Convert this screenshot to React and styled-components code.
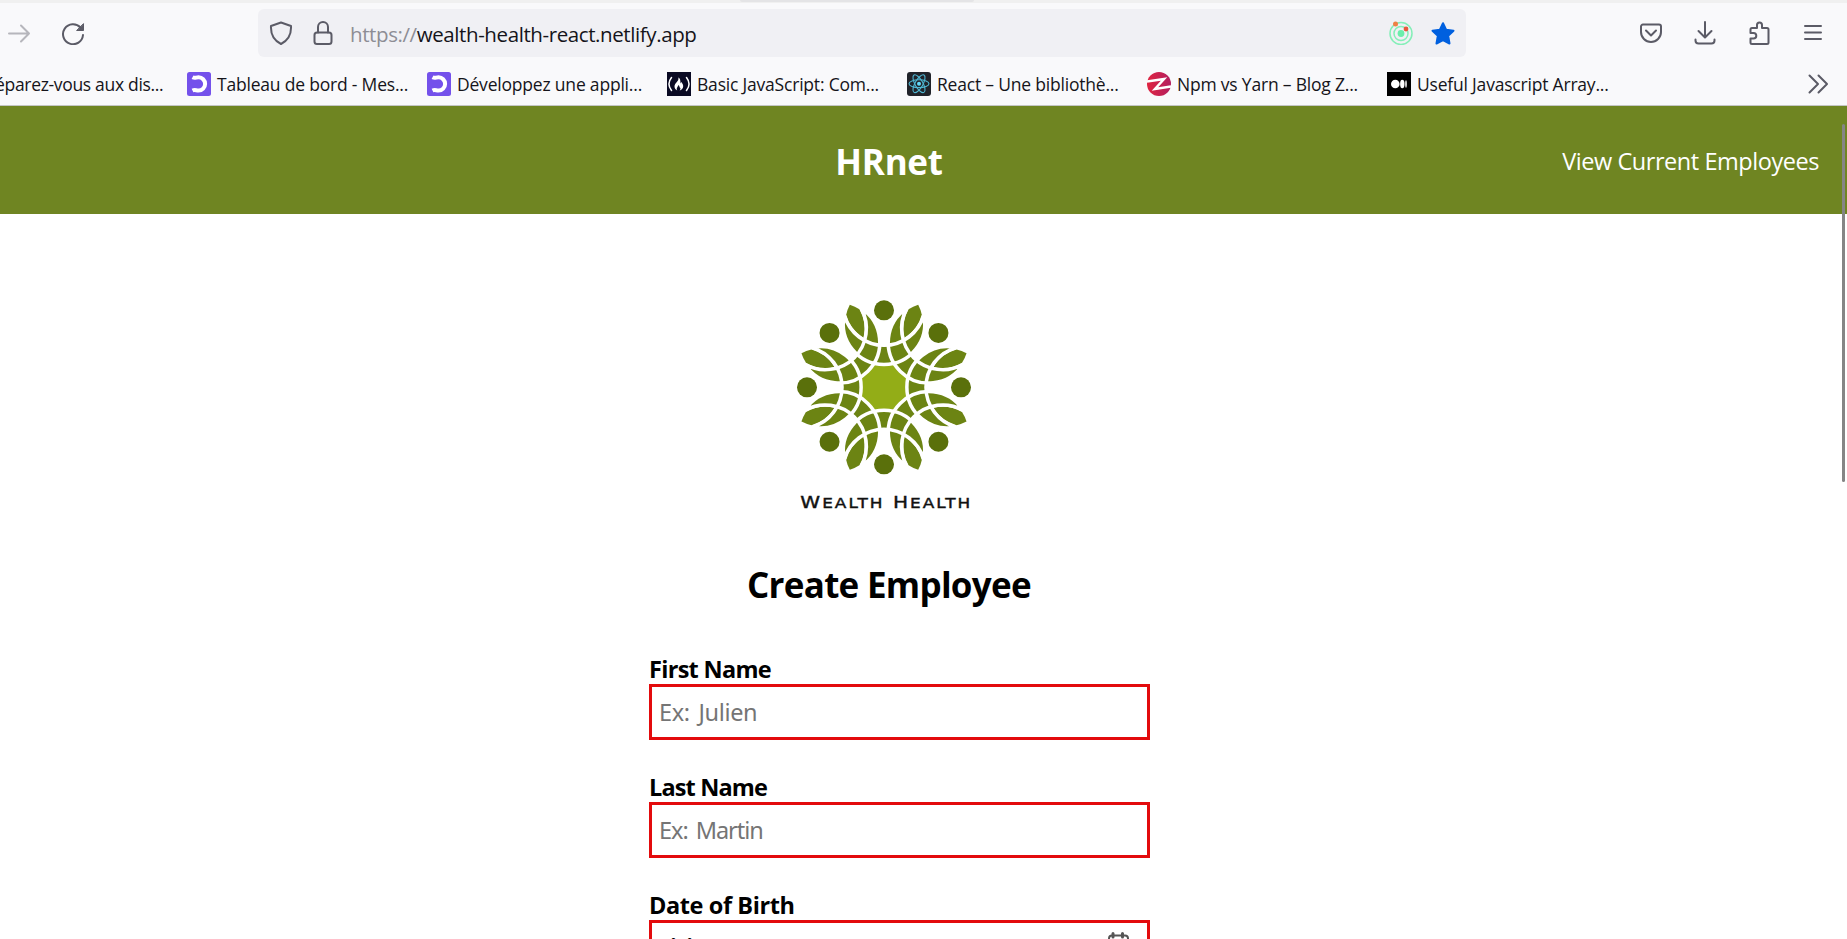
import React from "react";
import styled, { createGlobalStyle } from "styled-components";

const GlobalStyle = createGlobalStyle`
  * { box-sizing: border-box; }
  html, body { margin: 0; padding: 0; overflow: hidden; background: #fff; }
  body { font-family: "Open Sans", "Noto Sans", sans-serif; color: #000; }
  h1, h2 { margin: 0; }
`;

const Page = styled.div`
  width: 1847px;
  height: 939px;
  overflow: hidden;
  position: relative;
  display: flex;
  flex-direction: column;
`;

const TabStrip = styled.div`
  height: 3px;
  flex: none;
  background: #f0f0f0;
  padding-left: 740px;
`;

const TabEdge = styled.div`
  width: 234px;
  height: 2px;
  background: #e4e4e6;
  border-radius: 0 0 6px 6px;
`;

const Toolbar = styled.div`
  height: 62px;
  flex: none;
  background: #f9f9fb;
  display: flex;
  align-items: flex-start;
  padding: 6px 22px 0 8px;
`;

const NavButtons = styled.div`
  width: 250px;
  height: 48px;
  display: flex;
  align-items: center;
  gap: 28px;
`;

const UrlBar = styled.div`
  width: 1208px;
  height: 48px;
  border-radius: 6px;
  background: #f0f0f4;
  display: flex;
  align-items: center;
  padding: 0 11px 0 11px;
`;

const UrlText = styled.div`
  flex: 1;
  margin-left: 15px;
  padding-top: 2px;
  font-size: 20.5px;
  line-height: 28px;
  letter-spacing: -0.4px;
  color: #15141a;
  white-space: nowrap;
  span { color: #8d8d94; }
`;

const Icon = styled.svg`
  display: block;
  flex: none;
  width: 24px;
  height: 24px;
  margin-left: ${(p) => p.$left || 0}px;
  fill: none;
  stroke: ${(p) => p.$color || "#5b5b66"};
  stroke-width: 2;
  stroke-linecap: round;
  stroke-linejoin: round;
`;

const Actions = styled.div`
  flex: 1;
  height: 48px;
  display: flex;
  align-items: center;
  justify-content: flex-end;
  gap: 30px;
`;

const Bookmarks = styled.div`
  height: 41px;
  flex: none;
  background: #f9f9fb;
  border-bottom: 1px solid #c4c6c4;
  display: flex;
  align-items: flex-start;
  padding: 7px 17px 0 0;
`;

const Bookmark = styled.div`
  width: ${(p) => p.$width || 240}px;
  height: 24px;
  display: flex;
  align-items: center;
  gap: 6px;
  flex: none;
`;

const BookmarkText = styled.span`
  font-size: 17.5px;
  line-height: 24px;
  letter-spacing: ${(p) => p.$spacing || "-0.2px"};
  margin-left: ${(p) => p.$left || 0}px;
  color: #15141a;
  white-space: nowrap;
`;

const Overflow = styled.div`
  flex: 1;
  display: flex;
  justify-content: flex-end;
`;

const Header = styled.header`
  height: 108px;
  flex: none;
  background: #6f8522;
  color: #fff;
  display: grid;
  grid-template-columns: 1fr auto 1fr;
  align-items: center;
  padding: 3px 28px 0 0;
`;

const Brand = styled.h1`
  grid-column: 2;
  font-size: 35px;
  line-height: 48px;
  letter-spacing: -0.3px;
  margin-left: -41px;
  padding-top: 1px;
`;

const HeaderLink = styled.a`
  justify-self: end;
  font-size: 23.5px;
  line-height: 32px;
  padding-bottom: 2px;
  letter-spacing: -0.45px;
  color: #fff;
  white-space: nowrap;
`;

const Main = styled.main`
  flex: 1;
  display: flex;
  flex-direction: column;
  align-items: flex-start;
  overflow: hidden;
`;

const Logo = styled.svg`
  display: block;
  flex: none;
  width: 210px;
  height: 240px;
  margin: 71px 0 0 780px;
`;

const FormTitle = styled.h2`
  font-size: 35px;
  line-height: 48px;
  letter-spacing: -0.72px;
  margin: 36px 0 0 747px;
  white-space: nowrap;
`;

const Form = styled.form`
  width: 501px;
  margin: 43px 0 0 649px;
  display: flex;
  flex-direction: column;
  gap: 30px;
`;

const Field = styled.div`
  display: flex;
  flex-direction: column;
  height: 88px;
`;

const Label = styled.label`
  height: 32px;
  font-size: 23.5px;
  line-height: 34px;
  font-weight: 700;
  letter-spacing: ${(p) => p.$spacing || "-0.35px"};
  white-space: nowrap;
`;

const Control = styled.div`
  height: 56px;
  border: 3px solid #e30b0d;
  background: #fff;
  display: flex;
  align-items: center;
  padding: 0 17px 0 7px;
`;

const DateControl = styled(Control)`
  align-items: flex-start;
  justify-content: space-between;
  padding: 9px 17px 0 18px;
`;

const Placeholder = styled.span`
  font-family: "Noto Sans", sans-serif;
  font-size: 23.5px;
  line-height: 32px;
  letter-spacing: ${(p) => p.$spacing || "-0.5px"};
  word-spacing: 3px;
  color: #757575;
  white-space: nowrap;
`;

const DateText = styled.div`
  display: flex;
  margin-top: -2px;
  font-family: "Noto Sans", sans-serif;
  font-size: 24px;
  line-height: 33px;
`;

const DatePart = styled.span`
  width: ${(p) => p.$width}px;
  letter-spacing: ${(p) => p.$spacing || "0"};
  font-weight: ${(p) => p.$weight || 400};
`;

const ScrollThumb = styled.div`
  position: absolute;
  right: 2px;
  top: 124px;
  width: 3px;
  height: 358px;
  border-radius: 2px;
  background: #858585;
`;

const CRESCENT = "M-119.3-216.1A122 122 0 1 0 119.3-216.1A124 124 0 0 1-119.3-216.1Z";
const LEAF =
  "M0-160.3A119 119 0 0 1-21.5-244.5A116 116 0 0 1 0-268A116 116 0 0 1 21.5-244.5A119 119 0 0 1 0-160.3Z";
const TURNS = [0, 45, 90, 135, 180, 225, 270, 315];

function WealthLogo() {
  return (
    <Logo viewBox="0 0 630 720">
      <g transform="translate(312 307)">
        <circle r="78" fill="#93ad17" />
        {TURNS.map((a) => <path key={a} d={CRESCENT} fill="#6c8413" transform={`rotate(${a})`} />)}
        {TURNS.map((a) => <path key={a} d={LEAF} fill="#6c8413" transform={`rotate(${a + 22.5})`} />)}
        {TURNS.map((a) => (
          <path key={a} d={CRESCENT} fill="none" stroke="#fff" strokeWidth="10.5" transform={`rotate(${a})`} />
        ))}
        {TURNS.map((a) => <circle key={a} cy="-231" r="30" fill="#5a700b" transform={`rotate(${a})`} />)}
      </g>
      <text
        x="61" y="670" fill="#111" stroke="#111" strokeWidth="1.2" letterSpacing="5"
        fontFamily="DejaVu Sans" fontSize="50" textLength="516" lengthAdjust="spacingAndGlyphs"
      >
        W<tspan fontSize="42">EALTH</tspan> H<tspan fontSize="42">EALTH</tspan>
      </text>
    </Logo>
  );
}

function ClassroomIcon() {
  return (
    <Icon viewBox="0 0 24 24">
      <rect width="24" height="24" rx="2.500" fill="#7451eb" stroke="none" />
      <path d="M5.500 5.300C8 6.600 9 5.300 11.500 5.300A6.500 6.500 0 0 1 11.500 18.500C9 18.500 8 17.300 5.500 18.500" stroke="#fff" strokeWidth="4" strokeLinecap="butt" />
    </Icon>
  );
}

function CampIcon() {
  return (
    <Icon viewBox="0 0 24 24">
      <rect width="24" height="24" fill="#0a0a23" stroke="none" />
      <path d="M4.500 5.500Q-.600 12 4.500 18.500M19.500 5.500Q24.600 12 19.500 18.500" stroke="#fff" strokeWidth="1.500" />
      <path d="M11.300 5.500c1.200 3.500-3.800 5.500-3.800 9 0 2 1.200 3.300 2.800 4-1.500-2.500.8-3.500 1-5.500 1.500 1 1 2.500 2 3 .3.900 0 1.800-.8 2.500 2-.5 3.700-2 3.700-4.200 0-2-1-2.500-1.500-4.300-.8.600-.9 1.500-.9 1.500-.8-2 .2-4.500-2.500-6z" fill="#fff" stroke="none" />
    </Icon>
  );
}

function ReactIcon() {
  return (
    <Icon viewBox="0 0 24 24">
      <rect width="24" height="24" rx="3" fill="#20232a" stroke="none" />
      <g stroke="#4fb8d4" strokeWidth="1.1">
        {[0, 60, 120].map((a) => (
          <ellipse key={a} cx="12" cy="11.700" rx="10" ry="3.900" transform={`rotate(${a} 12 11.700)`} />
        ))}
      </g>
      <circle cx="12" cy="11.700" r="2" fill="#61dafb" stroke="none" />
    </Icon>
  );
}

function ZenikaIcon() {
  return (
    <Icon viewBox="0 0 24 24">
      <defs>
        <linearGradient id="zen" x1="0" x2="1">
          <stop offset="0" stopColor="#df2440" />
          <stop offset="1" stopColor="#b31f60" />
        </linearGradient>
      </defs>
      <circle cx="12" cy="12" r="12" fill="url(#zen)" stroke="none" />
      <path d="M0 9.500L17 7L8 17L24 14.500" stroke="#fff" strokeWidth="2.500" strokeLinejoin="miter" strokeLinecap="butt" />
    </Icon>
  );
}

function MediumIcon() {
  return (
    <Icon viewBox="0 0 24 24">
      <rect width="24" height="24" fill="#000" stroke="none" />
      <g fill="#fff" stroke="none">
        <circle cx="8.300" cy="12" r="4.300" />
        <ellipse cx="15.300" cy="12" rx="2.200" ry="4.200" />
        <ellipse cx="19" cy="12" rx=".8" ry="3.700" />
      </g>
    </Icon>
  );
}

const BOOKMARKS = [
  { text: "Tableau de bord - Mes...", icon: ClassroomIcon },
  { text: "Développez une appli...", icon: ClassroomIcon },
  { text: "Basic JavaScript: Com...", icon: CampIcon },
  { text: "React – Une bibliothè...", icon: ReactIcon },
  { text: "Npm vs Yarn – Blog Z...", icon: ZenikaIcon },
  { text: "Useful Javascript Array...", icon: MediumIcon },
];

function BrowserChrome() {
  return (
    <>
      <TabStrip><TabEdge /></TabStrip>
      <Toolbar>
        <NavButtons>
          <Icon viewBox="0 0 24 24" $color="#b6b6bc"><path d="M1 12.500H21M13 4.500L21 12.500L13 20.500" /></Icon>
          <Icon viewBox="0 0 24 24" $left={1}>
            <path d="M22 14A10 10 0 1 1 19.500 6.500" />
            <path d="M22.500 3V9.500H16Z" fill="#5b5b66" strokeWidth="1" />
          </Icon>
        </NavButtons>
        <UrlBar>
          <Icon viewBox="0 0 24 24"><path d="M12 1.500L22 5C22.500 14 19 19.500 12 23C5 19.500 1.500 14 2 5Z" /></Icon>
          <Icon viewBox="0 0 24 24" $left={18}>
            <rect x="3.500" y="11.500" width="17" height="11.500" rx="2.500" />
            <path d="M7 11.500V6a5 5 0 0 1 10 0V11.500" />
          </Icon>
          <UrlText><span>https://</span>wealth-health-react.netlify.app</UrlText>
          <Icon viewBox="0 0 24 24">
            <g stroke="#84efb8" strokeWidth="1.500">
              <circle cx="12" cy="12.500" r="11" /><circle cx="12" cy="12.500" r="7" />
            </g>
            <circle cx="12" cy="12.500" r="3.400" fill="#6beeab" stroke="none" />
            <circle cx="6.500" cy="3" r="2.500" fill="#ee8045" stroke="none" />
            <circle cx="17" cy="8" r="2.400" fill="#e9573c" stroke="none" />
          </Icon>
          <Icon viewBox="0 0 24 24" $left={18} $color="#0060df">
            <path d="M12 2.200L15.100 8.700L22.500 9.700L17.200 14.800L18.500 22.500L12 19L5.500 22.500L6.800 14.800L1.500 9.700L8.900 8.700Z" fill="#0060df" />
          </Icon>
        </UrlBar>
        <Actions>
          <Icon viewBox="0 0 24 24">
            <path d="M4 3.500H20a2 2 0 0 1 2 2V11A10 10 0 0 1 2 11V5.500A2 2 0 0 1 4 3.500Z" />
            <path d="M7 9.500L12 14.500L17 9.500" />
          </Icon>
          <Icon viewBox="0 0 24 24">
            <path d="M12 1V16M5.500 10L12 16.500L18.500 10M2.500 18.500V19.500a3 3 0 0 0 3 3H18.500a3 3 0 0 0 3-3V18.500" />
          </Icon>
          <Icon viewBox="0 0 24 24">
            <path d="M3.500 8.500A1.500 1.500 0 0 1 5 7H10V4a2.500 2.500 0 0 1 5 0V7H20A1.500 1.500 0 0 1 21.500 8.500V21.500A1.500 1.500 0 0 1 20 23H5A1.500 1.500 0 0 1 3.500 21.500V17.500H6.500a2.800 2.800 0 0 0 0-5.600H3.500Z" />
          </Icon>
          <Icon viewBox="0 0 24 24"><path d="M4 5H20M4 11.500H20M4 18H20" /></Icon>
        </Actions>
      </Toolbar>
      <Bookmarks>
        <Bookmark $width={187}><BookmarkText $left={-5} $spacing="-0.32px">éparez-vous aux dis...</BookmarkText></Bookmark>
        {BOOKMARKS.map(({ text, icon: Glyph }) => (
          <Bookmark key={text}><Glyph /><BookmarkText>{text}</BookmarkText></Bookmark>
        ))}
        <Overflow>
          <Icon viewBox="0 0 24 24"><path d="M3.500 3.500L12 12L3.500 20.500M12.500 3.500L21 12L12.500 20.500" /></Icon>
        </Overflow>
      </Bookmarks>
    </>
  );
}

export default function App() {
  return (
    <Page>
      <GlobalStyle />
      <BrowserChrome />
      <Header>
        <Brand>HRnet</Brand>
        <HeaderLink>View Current Employees</HeaderLink>
      </Header>
      <Main>
        <WealthLogo />
        <FormTitle>Create Employee</FormTitle>
        <Form>
          <Field>
            <Label $spacing="-0.7px">First Name</Label>
            <Control><Placeholder $spacing="-0.35px">Ex: Julien</Placeholder></Control>
          </Field>
          <Field>
            <Label $spacing="-0.85px">Last Name</Label>
            <Control><Placeholder $spacing="-1.05px">Ex: Martin</Placeholder></Control>
          </Field>
          <Field>
            <Label $spacing="-0.4px">Date of Birth</Label>
            <DateControl>
              <DateText>
                <DatePart $width={33} $spacing="9.500px" $weight={600}>jj</DatePart>
                <DatePart $width={9}>/</DatePart>
                <DatePart $width={48}>mm</DatePart>
                <DatePart $width={9}>/</DatePart>
                <DatePart>aaaa</DatePart>
              </DateText>
              <Icon viewBox="0 0 24 24" $color="#555">
                <rect x="3" y="3.500" width="19" height="18" rx="3" />
                <path d="M7 1.500V5M16.500 1.500V5M3 9H22" strokeWidth="3" />
              </Icon>
            </DateControl>
          </Field>
        </Form>
      </Main>
      <ScrollThumb />
    </Page>
  );
}
